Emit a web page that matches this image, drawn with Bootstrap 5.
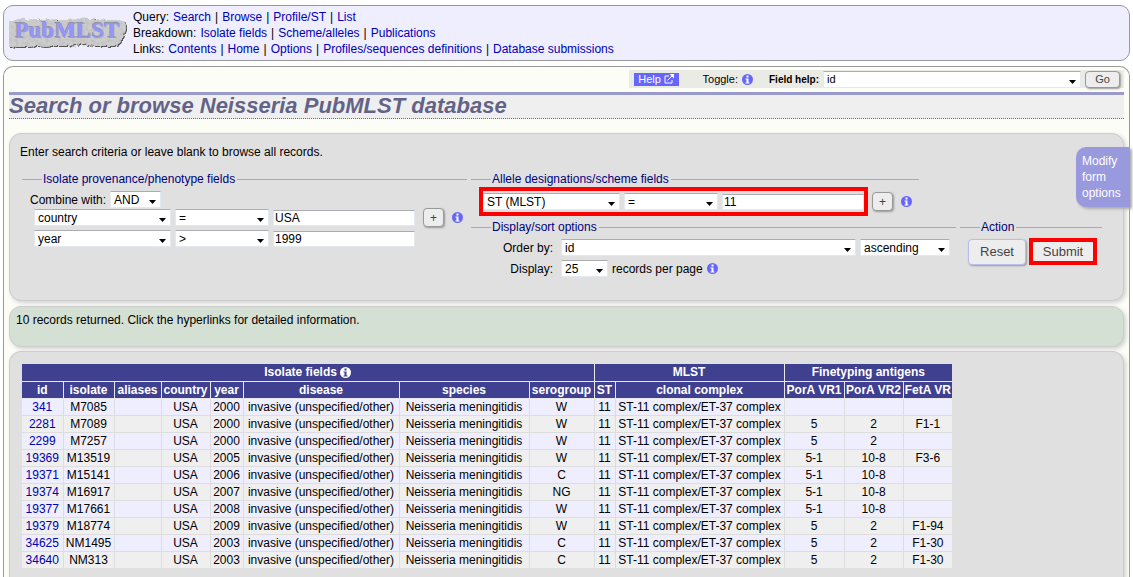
<!DOCTYPE html>
<html lang="en">
<head>
<meta charset="utf-8">
<meta name="viewport" content="width=device-width, initial-scale=1">
<title>Search or browse Neisseria PubMLST database</title>
<link href="https://cdn.jsdelivr.net/npm/bootstrap@5.3.0/dist/css/bootstrap.min.css" rel="stylesheet">
<style>
body{font-family:"Liberation Sans",Arial,sans-serif;font-size:12px;line-height:16px;color:#000;background:#fff;padding:5px 3px 0}
a{color:#0000b4;text-decoration:none}
a:hover{text-decoration:underline}
.site-head{background:#eef;border:1px solid #999;border-radius:10px;min-height:56px;padding:0 5px;column-gap:5px;margin-bottom:5px}
.site-logo{width:119px;height:34px}
.site-menu li{display:flex;gap:4px}
.site-main{background:#fdfdf8;border:1px solid #999;border-bottom:0;border-radius:10px 10px 0 0;padding:2px 5px 0}
.help-bar{font-size:11px;line-height:17px;background:#ebebe6;height:18px;padding-left:5px;margin-top:1px}
.help-bar label{font-size:10px}
.help-link{background:#66f;color:#fff;width:45px;height:13px;line-height:13px;gap:3px}
.page-title{font-size:22px;line-height:22px;font-weight:bold;font-style:italic;color:#636387;background:#efefef;border-top:3px solid #99c;border-bottom:1px dotted #669;margin:4px 0 14px;padding:0 0 1px}
.panel{border:1px solid #ccc;border-radius:12px;background:#e0e0e0;box-shadow:2px 2px 4px #d0d0d0}
.query-panel{padding:10px;min-height:168px;margin-bottom:5px}
.query-intro{margin:0 0 11px}
.query-fields{padding-left:2px}
.note-panel{background:#d4e0d4;padding:5px 6px;min-height:41px;margin-bottom:4px}
.result-panel{border-bottom:0;border-radius:12px 12px 0 0;padding:12px 12px 10px}
fieldset{border-top:1px solid #aaa}
legend{float:none;width:auto;font-size:12px;line-height:16px;color:#00007b;margin:0 0 0 20px;padding:0 2px 0 1px}
.panel .form-select,.panel .form-control,.help-bar .form-select{font-size:12px;line-height:14px;border:1px solid #e3e9ef;border-top-color:#abadb3;border-radius:1px;color:#000;background-color:#fff;height:17px;min-height:0;padding:0 3px;flex:none}
.panel .form-select,.help-bar .form-select{background-image:url("data:image/svg+xml,%3Csvg xmlns='http://www.w3.org/2000/svg' viewBox='0 0 7 4'%3E%3Cpath d='M0 0h7L3.5 4z'/%3E%3C/svg%3E");background-size:7px 4px;background-position:right 4px top 8px;padding-right:12px}
.panel .form-control{height:16px;padding:0 1px}
.help-bar .form-select{font-size:11px;width:258px}
.w-name{width:137px}.w-op{width:94px}.w-val{width:142px}.panel .w-and{width:51px}
.w-order{width:295px}.w-dir{width:90px}.w-num{width:47px}
.act{font-size:13px;line-height:16px;color:#444;background:#ededed;border:1px solid #bbe;border-radius:4px;padding:0;box-shadow:1px 1px 2px #999}
.act-plus{width:21px;height:19px;font-size:12px;line-height:16px;border-color:#999}
.act-go{font-size:11px;line-height:14px;width:35px;height:17px;border-color:#999}
.act-reset{width:58px;height:26px}
.act-submit{width:60px;height:19px;border:0;border-radius:2px;box-shadow:none}
.ring{border:4px solid #f00}
.ring-row{padding:2px 0}
.info-dot{width:11px;height:11px;flex:none;color:#66f;--mark:#fff}
.info-light{color:#fff;--mark:#404090;vertical-align:-2px}
.col-isolate{width:445px}
.col-scheme{width:448px}
.col-sort{width:485px}
.col-action{width:142px}
.row-label{width:82px;text-align:right}
.gap-tight{gap:3px}
.top-tight{margin-top:3px}
.side-tab{right:-1px;top:80px;width:54px;padding:6px 2px 6px 6px;border:0;border-radius:10px 0 0 10px;background:#99d;color:#fff;text-align:left;box-shadow:2px 2px 3px #aaa;font-size:12px}
.records{border-collapse:collapse;table-layout:fixed;width:930px;text-align:center;white-space:nowrap;background:#efeff0}
.records th,.records td{padding:0;height:17px;line-height:16px;border-right:1px solid #ddd;border-bottom:1px solid #ddd}
.records th{background:#404090;color:#fff;border-color:#e8e8e8}
.records tr>:last-child{border-right:0}
.records tbody tr:last-child td{border-bottom:0;height:16px}
.records tbody tr:nth-child(odd){background:#eef}
</style>
</head>
<body class="d-flex flex-column min-vh-100">
<svg class="d-none" aria-hidden="true">
  <symbol id="info" viewBox="0 0 11 11"><circle cx="5.500" cy="5.500" r="5.500" fill="currentColor"/><path fill="var(--mark)" d="M4.500 1.500h2v2h-2zM3.500 4.500h3v4h1v1h-4v-1h1v-3h-1z"/></symbol>
</svg>

<header class="site-head d-flex align-items-center">
  <a href="#" class="site-logo" aria-label="PubMLST">
    <svg width="119" height="34" viewBox="0 0 119 34">
      <defs>
        <filter id="stone" x="-5%" y="-10%" width="110%" height="120%">
          <feTurbulence type="fractalNoise" baseFrequency=".3" numOctaves="2" seed="4" result="t"/>
          <feDisplacementMap in="SourceGraphic" in2="t" scale="5" xChannelSelector="R" yChannelSelector="G" result="s"/>
          <feColorMatrix in="t" values="0 0 0 0 .4  0 0 0 0 .4  0 0 0 0 .4  1 0 0 0 -.38"/>
          <feComposite in2="s" operator="in" result="n"/>
          <feMerge result="rock"><feMergeNode in="s"/><feMergeNode in="n"/></feMerge>
          <feDropShadow in="rock" dx="1" dy="1" stdDeviation=".4" flood-color="#555"/>
        </filter>
      </defs>
      <path filter="url(#stone)" fill="#cdcdcd" d="M3 5l6-2 4-1 4 2 12-1 5 1 6-1 9 1 10 0 9-1 6-2 6 3 10-1 9 1 8 0 6 1 3 2 2 4-2 5-2 6-3 6-7 2-10 0-10 0-10-2-8 1-9 1-10 0-11 1-8-1-9 1-12 0-4-1-7 0-5-3-1-4 1-7-1-4z"/>
      <text x="6" y="22" font-family="Liberation Serif,serif" font-weight="bold" font-size="23" fill="#9696f8" style="text-shadow:-1px -1px 0 #9090a8">PubMLST</text>
    </svg>
  </a>
  <nav>
    <ul class="site-menu list-unstyled m-0">
      <li><span>Query:</span><a href="#">Search</a>|<a href="#">Browse</a>|<a href="#">Profile/ST</a>|<a href="#">List</a></li>
      <li><span>Breakdown:</span><a href="#">Isolate fields</a>|<a href="#">Scheme/alleles</a>|<a href="#">Publications</a></li>
      <li><span>Links:</span><a href="#">Contents</a>|<a href="#">Home</a>|<a href="#">Options</a>|<a href="#">Profiles/sequences definitions</a>|<a href="#">Database submissions</a></li>
    </ul>
  </nav>
</header>

<main class="site-main flex-grow-1 d-flex flex-column position-relative">
  <div class="help-bar d-flex align-items-center align-self-end">
    <a href="#" class="help-link d-flex align-items-center justify-content-center">Help
      <svg width="10" height="10" viewBox="0 0 10 10" fill="none" stroke="#fff"><path d="M5 2H1v7h7V6M3.500 6.500l5-5"/><path fill="#fff" stroke="none" d="M5.500 0H10v4.500z"/></svg>
    </a>
    <span class="ms-4 me-1">Toggle:</span>
    <svg class="info-dot"><use href="#info"/></svg>
    <label class="fw-bold ms-3 me-1" for="fieldHelp">Field help:</label>
    <select id="fieldHelp" class="form-select"><option>id</option></select>
    <button class="btn act act-go mx-1" type="button">Go</button>
  </div>

  <h1 class="page-title">Search or browse Neisseria PubMLST database</h1>

  <form class="panel query-panel">
    <p class="query-intro">Enter search criteria or leave blank to browse all records.</p>
    <div class="query-fields d-flex align-items-start gap-1">
      <fieldset class="col-isolate flex-shrink-0">
        <legend>Isolate provenance/phenotype fields</legend>
        <div class="d-flex align-items-center gap-1 mt-1 ms-2">
          <label for="combine">Combine with:</label>
          <select id="combine" class="form-select w-and"><option>AND</option></select>
        </div>
        <div class="d-flex align-items-center gap-1 ms-2 ps-1">
          <select class="form-select w-name" aria-label="First field"><option>country</option></select>
          <select class="form-select w-op" aria-label="First operator"><option>=</option></select>
          <input class="form-control w-val" aria-label="First value" value="USA">
          <button class="btn act act-plus mx-1" type="button">+</button>
          <svg class="info-dot"><use href="#info"/></svg>
        </div>
        <div class="d-flex align-items-center gap-1 ms-2 ps-1 top-tight">
          <select class="form-select w-name" aria-label="Second field"><option>year</option></select>
          <select class="form-select w-op" aria-label="Second operator"><option>&gt;</option></select>
          <input class="form-control w-val" aria-label="Second value" value="1999">
        </div>
      </fieldset>

      <div class="flex-grow-1">
        <fieldset class="col-scheme">
          <legend>Allele designations/scheme fields</legend>
          <div class="d-flex align-items-center gap-1 ms-2">
            <div class="ring ring-row d-flex align-items-center gap-1">
              <select class="form-select w-name" aria-label="Scheme field"><option>ST (MLST)</option></select>
              <select class="form-select w-op" aria-label="Scheme operator"><option>=</option></select>
              <input class="form-control w-val" aria-label="Scheme value" value="11">
            </div>
            <button class="btn act act-plus me-1" type="button">+</button>
            <svg class="info-dot"><use href="#info"/></svg>
          </div>
        </fieldset>
        <div class="d-flex gap-1 top-tight">
          <fieldset class="col-sort">
            <legend>Display/sort options</legend>
            <div class="d-flex align-items-center gap-1 mt-1">
              <label class="row-label me-1" for="order">Order by:</label>
              <select id="order" class="form-select w-order"><option>id</option></select>
              <select class="form-select w-dir" aria-label="Direction"><option>ascending</option></select>
            </div>
            <div class="d-flex align-items-center gap-1 mt-1">
              <label class="row-label me-1" for="perpage">Display:</label>
              <select id="perpage" class="form-select w-num"><option>25</option></select>
              <span>records per page</span>
              <svg class="info-dot"><use href="#info"/></svg>
            </div>
          </fieldset>
          <fieldset class="col-action">
            <legend>Action</legend>
            <div class="d-flex align-items-center gap-tight top-tight ms-2">
              <button class="btn act act-reset" type="reset">Reset</button>
              <div class="ring d-flex"><button class="btn act act-submit" type="submit">Submit</button></div>
            </div>
          </fieldset>
        </div>
      </div>
    </div>
  </form>

  <div class="panel note-panel">10 records returned. Click the hyperlinks for detailed information.</div>

  <section class="panel result-panel flex-grow-1">
    <table class="records">
      <colgroup><col style="width:41px"><col style="width:51px"><col style="width:47px"><col style="width:49px"><col style="width:33px"><col style="width:156px"><col style="width:130px"><col style="width:65px"><col style="width:21px"><col style="width:169px"><col style="width:60px"><col style="width:59px"><col style="width:49px"></colgroup>
      <thead>
        <tr><th colspan="8">Isolate fields <svg class="info-dot info-light"><use href="#info"/></svg></th><th colspan="2">MLST</th><th colspan="3">Finetyping antigens</th></tr>
        <tr><th>id</th><th>isolate</th><th>aliases</th><th>country</th><th>year</th><th>disease</th><th>species</th><th>serogroup</th><th>ST</th><th>clonal complex</th><th>PorA VR1</th><th>PorA VR2</th><th>FetA VR</th></tr>
      </thead>
      <tbody>
        <tr><td><a href="#">341</a></td><td>M7085</td><td></td><td>USA</td><td>2000</td><td>invasive (unspecified/other)</td><td>Neisseria meningitidis</td><td>W</td><td>11</td><td>ST-11 complex/ET-37 complex</td><td></td><td></td><td></td></tr>
        <tr><td><a href="#">2281</a></td><td>M7089</td><td></td><td>USA</td><td>2000</td><td>invasive (unspecified/other)</td><td>Neisseria meningitidis</td><td>W</td><td>11</td><td>ST-11 complex/ET-37 complex</td><td>5</td><td>2</td><td>F1-1</td></tr>
        <tr><td><a href="#">2299</a></td><td>M7257</td><td></td><td>USA</td><td>2000</td><td>invasive (unspecified/other)</td><td>Neisseria meningitidis</td><td>W</td><td>11</td><td>ST-11 complex/ET-37 complex</td><td>5</td><td>2</td><td></td></tr>
        <tr><td><a href="#">19369</a></td><td>M13519</td><td></td><td>USA</td><td>2005</td><td>invasive (unspecified/other)</td><td>Neisseria meningitidis</td><td>W</td><td>11</td><td>ST-11 complex/ET-37 complex</td><td>5-1</td><td>10-8</td><td>F3-6</td></tr>
        <tr><td><a href="#">19371</a></td><td>M15141</td><td></td><td>USA</td><td>2006</td><td>invasive (unspecified/other)</td><td>Neisseria meningitidis</td><td>C</td><td>11</td><td>ST-11 complex/ET-37 complex</td><td>5-1</td><td>10-8</td><td></td></tr>
        <tr><td><a href="#">19374</a></td><td>M16917</td><td></td><td>USA</td><td>2007</td><td>invasive (unspecified/other)</td><td>Neisseria meningitidis</td><td>NG</td><td>11</td><td>ST-11 complex/ET-37 complex</td><td>5-1</td><td>10-8</td><td></td></tr>
        <tr><td><a href="#">19377</a></td><td>M17661</td><td></td><td>USA</td><td>2008</td><td>invasive (unspecified/other)</td><td>Neisseria meningitidis</td><td>W</td><td>11</td><td>ST-11 complex/ET-37 complex</td><td>5-1</td><td>10-8</td><td></td></tr>
        <tr><td><a href="#">19379</a></td><td>M18774</td><td></td><td>USA</td><td>2009</td><td>invasive (unspecified/other)</td><td>Neisseria meningitidis</td><td>W</td><td>11</td><td>ST-11 complex/ET-37 complex</td><td>5</td><td>2</td><td>F1-94</td></tr>
        <tr><td><a href="#">34625</a></td><td>NM1495</td><td></td><td>USA</td><td>2003</td><td>invasive (unspecified/other)</td><td>Neisseria meningitidis</td><td>C</td><td>11</td><td>ST-11 complex/ET-37 complex</td><td>5</td><td>2</td><td>F1-30</td></tr>
        <tr><td><a href="#">34640</a></td><td>NM313</td><td></td><td>USA</td><td>2003</td><td>invasive (unspecified/other)</td><td>Neisseria meningitidis</td><td>C</td><td>11</td><td>ST-11 complex/ET-37 complex</td><td>5</td><td>2</td><td>F1-30</td></tr>
      </tbody>
    </table>
  </section>

  <button class="side-tab position-absolute" type="button">Modify form options</button>
</main>
<script src="https://cdn.jsdelivr.net/npm/bootstrap@5.3.0/dist/js/bootstrap.bundle.min.js"></script>
</body>
</html>
